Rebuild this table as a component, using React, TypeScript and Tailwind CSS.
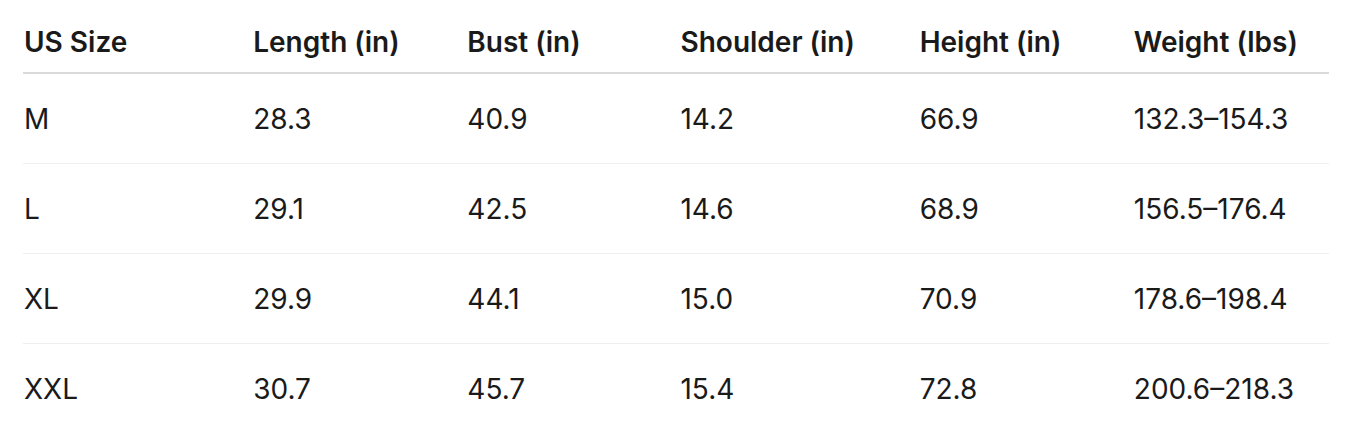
const headers = ['US Size', 'Length (in)', 'Bust (in)', 'Shoulder (in)', 'Height (in)', 'Weight (lbs)'];

const rows = [
  ['M', '28.3', '40.9', '14.2', '66.9', '132.3–154.3'],
  ['L', '29.1', '42.5', '14.6', '68.9', '156.5–176.4'],
  ['XL', '29.9', '44.1', '15.0', '70.9', '178.6–198.4'],
  ['XXL', '30.7', '45.7', '15.4', '72.8', '200.6–218.3'],
];

const widths = ['w-[229px]', 'w-[214px]', 'w-[213px]', 'w-[239px]', 'w-[214px]', 'w-[196px]'];

export default function App() {
  return (
    <div className="min-h-[443px] bg-white px-[23px] font-['Inter',sans-serif] text-[#1a1a1a]">
      <table className="w-[1306px] table-fixed border-collapse">
        <colgroup>
          {widths.map((w, i) => (
            <col key={i} className={w} />
          ))}
        </colgroup>
        <thead>
          <tr className="border-b-2 border-[#dadada]">
            {headers.map((h) => (
              <th key={h} className="h-[73px] pt-[11px] pl-px text-left align-middle text-[28px] font-semibold leading-none">
                {h}
              </th>
            ))}
          </tr>
        </thead>
        <tbody>
          {rows.map((row, r) => (
            <tr key={r} className={r < rows.length - 1 ? 'border-b border-[#efefef]' : ''}>
              {row.map((cell, c) => (
                <td key={c} className="h-[90px] pt-[2px] pl-px align-middle text-[28px] font-normal leading-none">
                  {cell}
                </td>
              ))}
            </tr>
          ))}
        </tbody>
      </table>
    </div>
  );
}
